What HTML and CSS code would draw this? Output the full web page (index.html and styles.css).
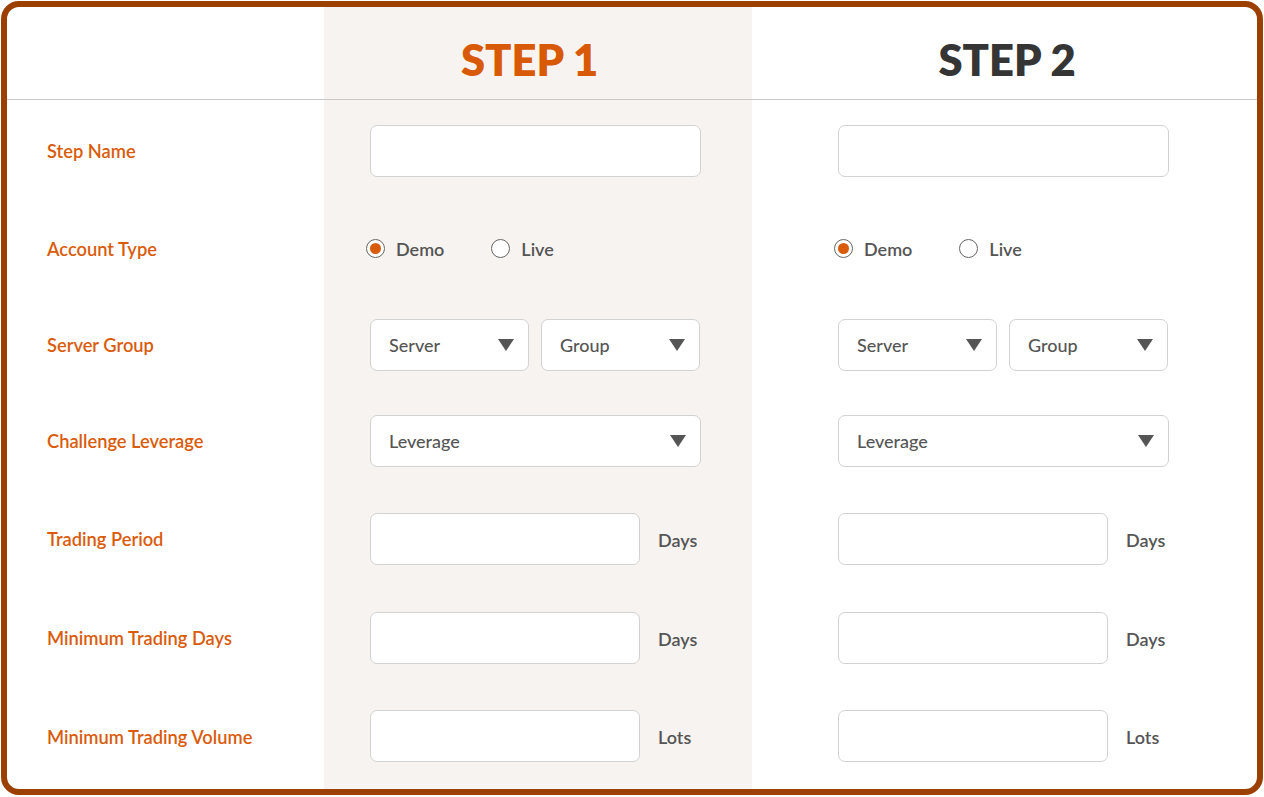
FILE: index.html
```html
<!DOCTYPE html>
<html lang="en">
<head>
<meta charset="utf-8">
<title>Challenge Steps</title>
<link rel="stylesheet" href="styles.css">
</head>
<body>
<div class="sheet">
  <div class="cell head"></div>
  <div class="cell head col-1"><h2 class="step-title active">STEP 1</h2></div>
  <div class="cell head col-2"><h2 class="step-title">STEP 2</h2></div>

  <div class="cell label">Step Name</div>
  <div class="cell col-1"><div class="field wide"></div></div>
  <div class="cell col-2"><div class="field wide"></div></div>

  <div class="cell label">Account Type</div>
  <div class="cell col-1">
    <div class="radios">
      <span class="radio-opt"><span class="radio checked"></span>Demo</span>
      <span class="radio-opt"><span class="radio"></span>Live</span>
    </div>
  </div>
  <div class="cell col-2">
    <div class="radios">
      <span class="radio-opt"><span class="radio checked"></span>Demo</span>
      <span class="radio-opt"><span class="radio"></span>Live</span>
    </div>
  </div>

  <div class="cell label">Server Group</div>
  <div class="cell col-1">
    <div class="pair">
      <div class="field select half"><span>Server</span><svg class="caret" viewBox="0 0 16 12" width="16" height="12"><polygon points="0,0 16,0 8,12"/></svg></div>
      <div class="field select half"><span>Group</span><svg class="caret" viewBox="0 0 16 12" width="16" height="12"><polygon points="0,0 16,0 8,12"/></svg></div>
    </div>
  </div>
  <div class="cell col-2">
    <div class="pair">
      <div class="field select half"><span>Server</span><svg class="caret" viewBox="0 0 16 12" width="16" height="12"><polygon points="0,0 16,0 8,12"/></svg></div>
      <div class="field select half"><span>Group</span><svg class="caret" viewBox="0 0 16 12" width="16" height="12"><polygon points="0,0 16,0 8,12"/></svg></div>
    </div>
  </div>

  <div class="cell label">Challenge Leverage</div>
  <div class="cell col-1"><div class="field select wide"><span>Leverage</span><svg class="caret" viewBox="0 0 16 12" width="16" height="12"><polygon points="0,0 16,0 8,12"/></svg></div></div>
  <div class="cell col-2"><div class="field select wide"><span>Leverage</span><svg class="caret" viewBox="0 0 16 12" width="16" height="12"><polygon points="0,0 16,0 8,12"/></svg></div></div>

  <div class="cell label">Trading Period</div>
  <div class="cell col-1"><div class="unit-row"><div class="field short"></div><span class="unit">Days</span></div></div>
  <div class="cell col-2"><div class="unit-row"><div class="field short"></div><span class="unit">Days</span></div></div>

  <div class="cell label">Minimum Trading Days</div>
  <div class="cell col-1"><div class="unit-row"><div class="field short"></div><span class="unit">Days</span></div></div>
  <div class="cell col-2"><div class="unit-row"><div class="field short"></div><span class="unit">Days</span></div></div>

  <div class="cell label last">Minimum Trading Volume</div>
  <div class="cell col-1"><div class="unit-row"><div class="field short"></div><span class="unit">Lots</span></div></div>
  <div class="cell col-2"><div class="unit-row"><div class="field short"></div><span class="unit">Lots</span></div></div>
</div>
</body>
</html>
```
FILE: styles.css
```css
* { box-sizing: border-box; }
html, body { margin: 0; padding: 0; background: #ffffff; }
body {
  font-family: Lato, "Noto Sans", sans-serif;
  color: #555555;
}
.sheet {
  margin: 1px;
  width: 1262px;
  height: 794px;
  border: 6px solid #9b4000;
  border-radius: 18px;
  overflow: hidden;
  display: grid;
  grid-template-columns: 317px 428px 1fr;
  grid-template-rows: 93px 99px 97px 95px 97px 99px 99px 97px 1fr;
  background: linear-gradient(to right, #ffffff 317px, #f7f3f0 317px, #f7f3f0 745px, #ffffff 745px);
}
.cell {
  display: flex;
  align-items: center;
  padding-top: 2px;
}
.head {
  border-bottom: 1px solid #c8c8c8;
  justify-content: center;
  padding-top: 13px;
}
.col-1 { padding-left: 46px; }
.col-2 { padding-left: 86px; }
.head.col-1 { padding-left: 0; padding-right: 17px; }
.head.col-2 { padding-left: 5px; }
.step-title {
  margin: 0;
  font-size: 43.5px;
  font-weight: 800;
  color: #353535;
  line-height: 1;
}
.step-title.active { color: #d85a07; }
.label {
  padding-left: 40px;
  color: #d95c0c;
  font-size: 18.3px;
  font-weight: 600;
}
.label.last { padding-top: 5px; }
.field {
  height: 52px;
  background: #ffffff;
  border: 1px solid #d2d2d2;
  border-radius: 7px;
}
.wide { width: 331px; }
.half { width: 159px; }
.short { width: 270px; }
.pair { display: flex; gap: 12px; }
.select {
  display: flex;
  align-items: center;
  justify-content: space-between;
  padding: 0 14px 0 18px;
  font-size: 18px;
  font-weight: 500;
  color: #555555;
}
.caret { fill: #555555; display: block; margin-top: 1px; }
.unit-row { display: flex; align-items: center; gap: 18px; }
.unit { font-size: 18px; font-weight: 600; color: #555555; padding-top: 3px; }
.radios { display: flex; gap: 47px; margin-left: -4px; }
.radio-opt {
  display: inline-flex;
  align-items: center;
  gap: 11px;
  font-size: 18px;
  font-weight: 600;
  color: #555555;
}
.radio {
  width: 19px;
  height: 19px;
  border: 1.5px solid #666666;
  border-radius: 50%;
  display: inline-flex;
  align-items: center;
  justify-content: center;
  background: #ffffff;
}
.radio.checked::after {
  content: "";
  width: 11px;
  height: 11px;
  border-radius: 50%;
  background: #d95c0c;
}
```
